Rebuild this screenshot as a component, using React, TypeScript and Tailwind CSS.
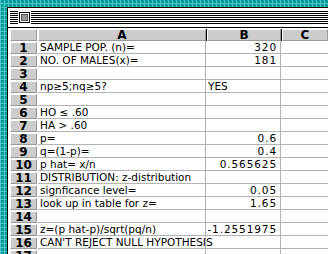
const rows: [string, string, string][] = [
  ["1", "SAMPLE POP. (n)=", "320"],
  ["2", "NO. OF MALES(x)=", "181"],
  ["3", "", ""],
  ["4", "np\u22655;nq\u22655?", "YES"],
  ["5", "", ""],
  ["6", "HO \u2264 .60", ""],
  ["7", "HA > .60", ""],
  ["8", "p=", "0.6"],
  ["9", "q=(1-p)=", "0.4"],
  ["10", "p hat= x/n", "0.565625"],
  ["11", "DISTRIBUTION: z-distribution", ""],
  ["12", "signficance level=", "0.05"],
  ["13", "look up in table for z=", "1.65"],
  ["14", "", ""],
  ["15", "z=(p hat-p)/sqrt(pq/n)", "-1.2551975"],
  ["16", "CAN'T REJECT NULL HYPOTHESIS", ""],
  ["17", "", ""],
];

function HeadCell({ label, className }: { label: string; className?: string }) {
  return (
    <div
      className={`h-full bg-[#cccccc] border-t border-l border-white border-r border-b border-r-[#999999] border-b-[#999999] flex items-center justify-center font-bold text-[12px] leading-none text-black ${className ?? ""}`}
    >
      {label}
    </div>
  );
}

const stripes = { backgroundImage: "repeating-linear-gradient(0deg, #000 0 1px, #fff 1px 2px)" };

export default function App() {
  return (
    <div
      className="w-[328px] h-[254px] overflow-hidden bg-[#0a9c9c] pl-[7px] pt-[7px]"
      style={{
        backgroundImage:
          "linear-gradient(90deg, rgba(120,230,230,0.55) 1px, transparent 1px), linear-gradient(0deg, rgba(120,230,230,0.55) 1px, transparent 1px)",
        backgroundSize: "4px 4px",
      }}
    >
      <div
        className="h-[260px] bg-white border-l border-t border-black flex flex-col"
        style={{ fontFamily: '"DejaVu Sans", sans-serif' }}
      >
        {/* title bar */}
        <div className="h-[19px] shrink-0 flex items-center pl-[2px]">
          <div className="h-[13px] w-[8px]" style={stripes} />
          <div className="h-[13px] px-[1px] bg-white">
            <div className="w-[11px] h-[11px] mt-[1px] border border-black bg-white p-[1px]">
              <div className="w-full h-full bg-[#9a9a9a] border border-[#555555]" />
            </div>
          </div>
          <div className="h-[13px] flex-1" style={stripes} />
        </div>
        <div className="h-px bg-black shrink-0" />

        {/* column header */}
        <div className="flex h-[12px] mt-[1px] shrink-0">
          <div className="w-[2px]" />
          <HeadCell label="" className="w-[27px]" />
          <div className="w-[1px]" />
          <HeadCell label="A" className="w-[168px]" />
          <div className="w-[1px] bg-black" />
          <HeadCell label="B" className="w-[74px]" />
          <div className="w-[1px] bg-black" />
          <HeadCell label="C" className="flex-1" />
        </div>

        {rows.map(([n, a, b]) => (
          <div key={n} className="flex h-[13px] shrink-0 text-[10.5px] leading-none text-black">
            <div className="w-[2px]" />
            <div className="w-[27px] pt-[1px]">
              <HeadCell label={n} className="w-full" />
            </div>
            <div className="w-[1px]" />
            <div className="w-[168px] border-b border-r border-[#b3b3b3] pl-[2px] flex items-center whitespace-nowrap">
              <span className="relative z-10">{a}</span>
            </div>
            <div
              className={`w-[75px] border-b border-r border-[#b3b3b3] flex items-center whitespace-nowrap ${
                b === "YES" ? "justify-start pl-[2px]" : "justify-end pr-[3px] tracking-[0.9px]"
              }`}
            >
              {b}
            </div>
            <div className="flex-1 border-b border-[#b3b3b3]" />
          </div>
        ))}
      </div>
    </div>
  );
}
